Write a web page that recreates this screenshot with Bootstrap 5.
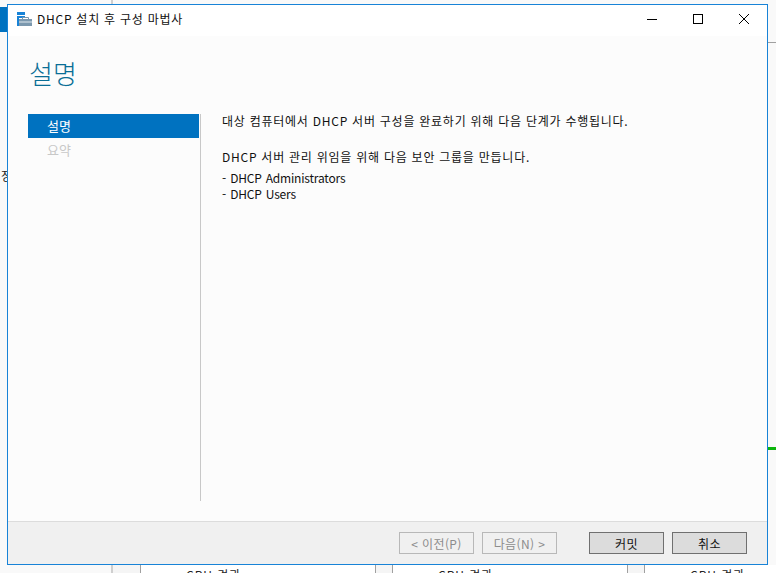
<!DOCTYPE html>
<html lang="ko">
<head>
<meta charset="utf-8">
<title>DHCP 설치 후 구성 마법사</title>
<link href="https://cdn.jsdelivr.net/npm/bootstrap@5.3.0/dist/css/bootstrap.min.css" rel="stylesheet">
<style>
html,body{height:573px;overflow:hidden;}
body{background:#f9f9f9;font-family:"Noto Sans CJK KR","Noto Sans",sans-serif;font-size:12px;color:#000;position:relative;}
.bg-tab{position:absolute;left:0;top:7px;width:7px;height:25px;background:#0072c0;}
.bg-top{position:absolute;left:111px;top:0;width:2px;height:4px;background:#cfcfcf;}
.bg-rule{position:absolute;left:768px;top:42px;width:8px;height:1px;background:#a0a0a0;}
.bg-green{position:absolute;left:768px;top:447px;width:8px;height:3px;background:#0cb50c;}
.bg-strip{position:absolute;left:0;top:565px;width:776px;height:8px;overflow:hidden;}
.bg-side{flex:none;width:113px;border-right:2px solid #cfcfcf;}
.bg-gap{background:#f5f5f5;flex:none;}
.bg-cell{background:#fff;flex:none;width:236px;border-left:1px solid #a0a0a0;border-right:1px solid #a0a0a0;font-size:12px;line-height:16px;color:#222;letter-spacing:1px;padding:2px 0 0 45px;white-space:nowrap;}
.bg-stray{position:absolute;left:1px;top:168px;font-size:12px;line-height:16px;color:#222;}
.wiz{position:absolute;left:7px;top:4px;width:761px;height:561px;border:1px solid #1883d7;background:#fcfcfc;}
.wiz-title{height:31px;background:#fff;padding:0 0 3px 9px;}
.wiz-title-text{font-size:12px;margin-left:5px;letter-spacing:.75px;color:#111;}
.ctl{width:46px;height:28px;}
.wiz-head{height:78px;padding:22px 0 0 21px;}
.wiz-head h1{font-size:26px;line-height:30px;font-weight:300;color:#0a6e96;margin:0;}
.wiz-body{height:387px;}
.wiz-nav{width:193px;padding-left:20px;}
.wiz-step{height:24px;padding-left:19px;line-height:24px;font-size:13px;}
.wiz-step-on{background:#0072c0;color:#fff;width:171px;}
.wiz-step-off{color:#c8c8c8;}
.wiz-main{border-left:1px solid #c8c8c8;padding:0 0 0 21px;height:387px;margin-left:-1px;}
.wiz-main p{margin:0;line-height:16px;white-space:nowrap;color:#111;}
.wiz-main .ko{letter-spacing:.75px;}
.wiz-main .en{letter-spacing:-.2px;word-spacing:1px;}
.wiz-foot{position:absolute;left:0;right:0;bottom:0;height:43px;background:#f0f0f0;border-top:1px solid #dcdcdc;padding:10px 20px 0 0;}
.wiz-btn{width:75px;height:22px;padding:0;font-size:12px;line-height:19px;letter-spacing:.4px;border:1px solid #707070;background:#dcdcdc;color:#111;border-radius:0;}
.wiz-btn:disabled{border-color:#b8b8b8;background:#f0f0f0;color:#8c8c8c;opacity:1;}
</style>
</head>
<body>
<div class="bg-tab"></div>
<div class="bg-top"></div>
<div class="bg-rule"></div>
<div class="bg-green"></div>
<div class="bg-stray">정</div>
<div class="bg-strip d-flex">
  <div class="bg-side"></div>
  <div class="bg-gap" style="width:27px"></div>
  <div class="bg-cell">CPU 경과</div>
  <div class="bg-gap" style="width:16px"></div>
  <div class="bg-cell">CPU 경과</div>
  <div class="bg-gap" style="width:16px"></div>
  <div class="bg-cell">CPU 경과</div>
</div>

<div class="wiz">
  <div class="wiz-title d-flex align-items-center">
    <svg width="15" height="15" viewBox="0 0 15 15"><rect x="0" y="0" width="8" height="3" fill="#1883d7"/><rect x="0" y="4" width="8" height="2" fill="#1883d7"/><rect x="0" y="6" width="2" height="8" fill="#1883d7"/><path d="M5.5 7V5.5h6V7" fill="none" stroke="#7b98ae"/><rect x="2" y="7" width="13" height="7" fill="#7b98ae"/><rect x="2" y="9.5" width="13" height="1" fill="#dfe8ee"/></svg>
    <span class="wiz-title-text flex-grow-1">DHCP 설치 후 구성 마법사</span>
    <div class="ctl d-flex align-items-center justify-content-center"><svg width="10" height="10"><path d="M0 5.5h10" stroke="#000"/></svg></div>
    <div class="ctl d-flex align-items-center justify-content-center"><svg width="10" height="10"><rect x=".5" y=".5" width="9" height="9" fill="none" stroke="#000"/></svg></div>
    <div class="ctl d-flex align-items-center justify-content-center"><svg width="10" height="10"><path d="M0 0l10 10M10 0L0 10" stroke="#000"/></svg></div>
  </div>
  <div class="wiz-head"><h1>설명</h1></div>
  <div class="wiz-body d-flex">
    <div class="wiz-nav">
      <div class="wiz-step wiz-step-on">설명</div>
      <div class="wiz-step wiz-step-off">요약</div>
    </div>
    <div class="wiz-main">
      <p class="ko" style="margin-top:-1px">대상 컴퓨터에서 DHCP 서버 구성을 완료하기 위해 다음 단계가 수행됩니다.</p>
      <p class="ko" style="margin-top:20px">DHCP 서버 관리 위임을 위해 다음 보안 그룹을 만듭니다.</p>
      <p class="en" style="margin-top:5px">- DHCP Administrators</p>
      <p class="en">- DHCP Users</p>
    </div>
  </div>
  <div class="wiz-foot d-flex justify-content-end">
    <button class="wiz-btn btn" disabled>&lt; 이전(P)</button>
    <button class="wiz-btn btn ms-2" disabled>다음(N) &gt;</button>
    <button class="wiz-btn btn" style="margin-left:32px">커밋</button>
    <button class="wiz-btn btn ms-2">취소</button>
  </div>
</div>
<script src="https://cdn.jsdelivr.net/npm/bootstrap@5.3.0/dist/js/bootstrap.bundle.min.js"></script>
</body>
</html>
